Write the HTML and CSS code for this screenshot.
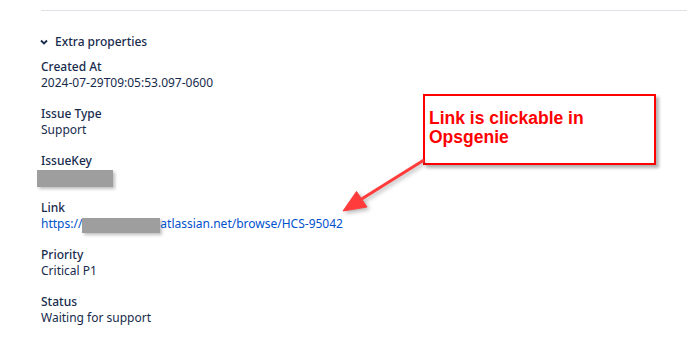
FILE: index.html
```html
<!DOCTYPE html>
<html lang="en">
<head>
<meta charset="utf-8">
<title>Extra properties</title>
<link rel="stylesheet" href="styles.css">
</head>
<body>
<div class="page">
  <div class="divider"></div>
  <div class="section">
    <div class="section-head">
      <svg class="chevron" width="8" height="6" viewBox="0 0 8 6"><path d="M1 1.5 L4 4.5 L7 1.5" fill="none" stroke="#172b4d" stroke-width="1.8"/></svg>
      <span>Extra properties</span>
    </div>
    <div class="props">
      <div class="prop"><div class="label">Created At</div><div class="value">2024-07-29T09:05:53.097-0600</div></div>
      <div class="prop"><div class="label">Issue Type</div><div class="value">Support</div></div>
      <div class="prop"><div class="label">IssueKey</div><div class="value"><span class="redact redact-key"></span></div></div>
      <div class="prop"><div class="label">Link</div><div class="value"><a class="link" href="#">https://<span class="redact redact-link"></span>atlassian.net/browse/HCS-95042</a></div></div>
      <div class="prop"><div class="label">Priority</div><div class="value">Critical P1</div></div>
      <div class="prop"><div class="label">Status</div><div class="value">Waiting for support</div></div>
    </div>
  </div>
  <div class="callout">Link is clickable in<br>Opsgenie</div>
  <svg class="arrow" width="120" height="80" viewBox="330 145 120 80">
    <g fill="#ff3b3b" stroke="#ff3b3b">
      <line x1="424" y1="160" x2="360" y2="200" stroke-width="3"/>
      <polygon points="343,211 356.5,191.5 367,207" stroke-width="1"/>
    </g>
  </svg>
</div>
</body>
</html>
```

FILE: styles.css
```css
html, body {
  margin: 0;
  padding: 0;
  background: #ffffff;
}
.page {
  position: relative;
  width: 687px;
  height: 344px;
  overflow: hidden;
  font-family: "Noto Sans", "Open Sans", sans-serif;
  font-size: 12px;
  line-height: 16px;
  color: #172b4d;
}
.divider {
  margin: 10px 0 0 41px;
  height: 1px;
  background: #dfe1e6;
}
.section {
  padding: 23px 0 0 39px;
}
.section-head {
  display: flex;
  align-items: center;
  gap: 7px;
  font-weight: 500;
  margin-bottom: 9px;
}
.chevron {
  display: block;
  margin-left: 1px;
}
.props {
  display: flex;
  flex-direction: column;
  gap: 15px;
  padding-left: 2px;
}
.label {
  font-weight: 500;
}
.value {
  height: 16px;
}
.redact {
  display: inline-block;
  background: #9e9e9e;
  box-shadow: 2px 2px 3px rgba(0, 0, 0, 0.25);
}
.redact-key {
  width: 76px;
  height: 17px;
  margin: 1px 0 0 -4px;
  vertical-align: top;
}
.redact-link {
  width: 78px;
  height: 15px;
  vertical-align: -5px;
}
.link {
  color: #0052cc;
  text-decoration: none;
}
.callout {
  position: absolute;
  left: 423px;
  top: 94px;
  width: 221px;
  height: 54px;
  padding: 13px 4px 0 4px;
  border: 2px solid #ff0000;
  background: #ffffff;
  box-shadow: 3px 3px 3px rgba(0, 0, 0, 0.3);
  color: #ff0000;
  font-family: "Liberation Sans", Arial, sans-serif;
  font-weight: 700;
  font-size: 17.5px;
  line-height: 19px;
}
.arrow {
  position: absolute;
  left: 330px;
  top: 145px;
  filter: drop-shadow(2px 2px 2px rgba(0, 0, 0, 0.3));
}
```
